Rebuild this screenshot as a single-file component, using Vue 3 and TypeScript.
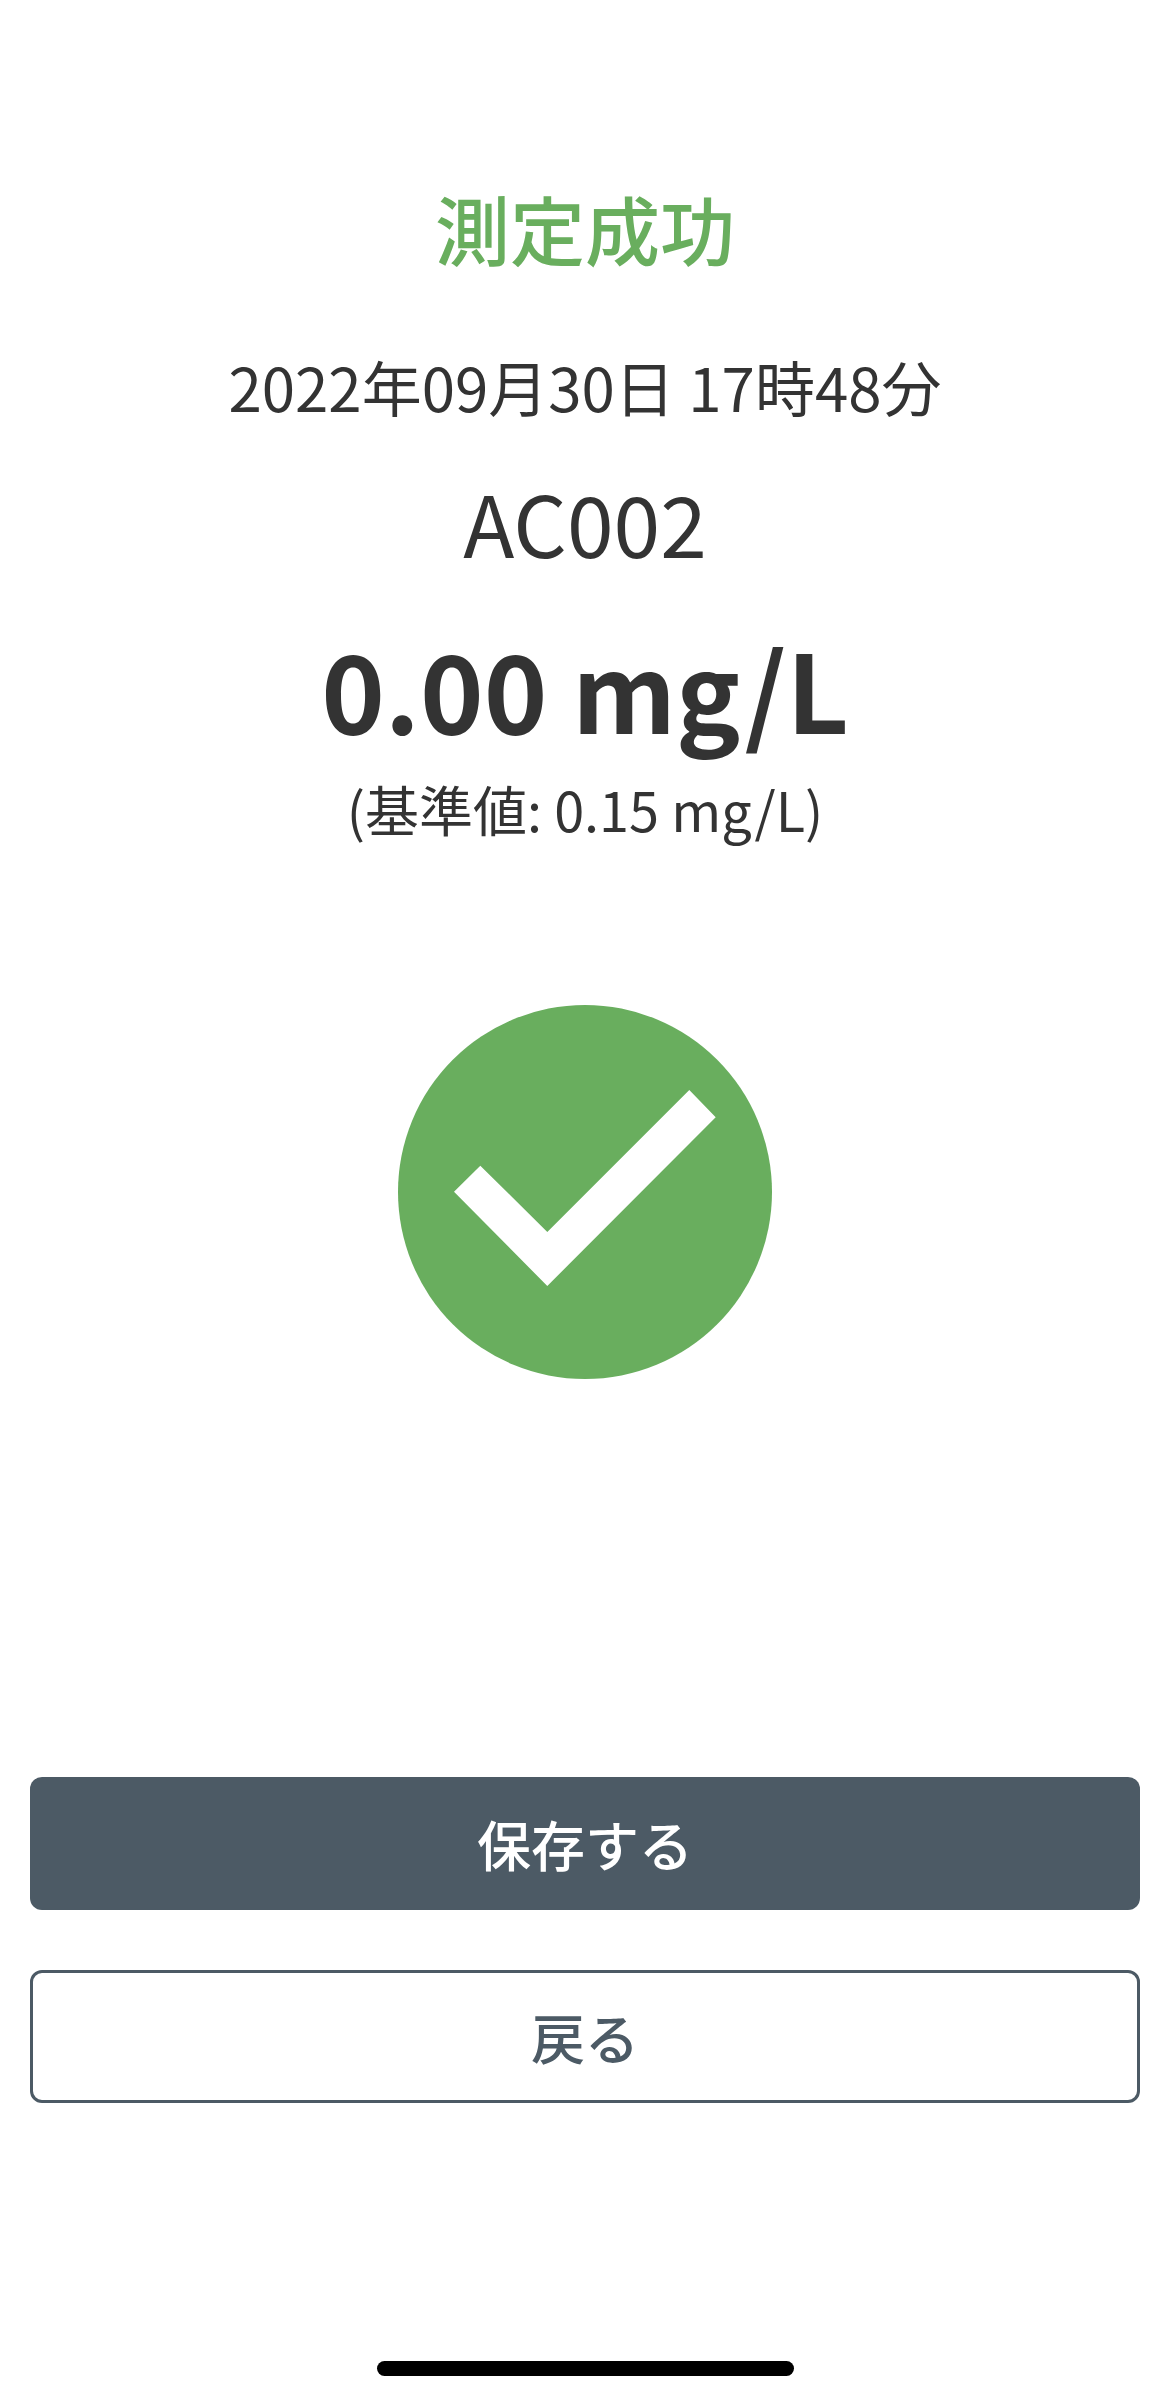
<template>
  <div class="page">
    <h1 class="title">測定成功</h1>
    <p class="date">2022年09月30日 17時48分</p>
    <p class="device">AC002</p>
    <p class="value">0.00 mg/L</p>
    <p class="limit">(基準値: 0.15 mg/L)</p>

    <svg class="result-icon" viewBox="0 0 374 374" width="374" height="374" aria-hidden="true">
      <circle cx="187" cy="187" r="187" fill="#69ae5e" />
      <polygon
        points="56,186.7 82.3,160.7 149.3,227 291.3,85 317.7,112.3 149.3,281"
        fill="#fff"
      />
    </svg>

    <div class="actions">
      <button class="btn btn-primary" type="button">保存する</button>
      <button class="btn btn-outline" type="button">戻る</button>
    </div>

    <div class="home-bar"></div>
  </div>
</template>

<script setup lang="ts">
</script>

<style>
html,
body {
  margin: 0;
  background: #fff;
}
</style>

<style scoped>
.page {
  box-sizing: border-box;
  width: 1170px;
  height: 2400px;
  padding: 0 30px 24px;
  display: flex;
  flex-direction: column;
  align-items: center;
  font-family: "Noto Sans CJK JP", "Noto Sans", sans-serif;
  color: #333;
  text-align: center;
}

.title {
  margin: 178px 0 0;
  font-size: 75px;
  line-height: 100px;
  font-weight: 500;
  color: #69ae5e;
}

.date {
  margin: 68px 0 0;
  font-size: 60px;
  line-height: 80px;
}

.device {
  margin: 38px 0 0;
  font-size: 84px;
  line-height: 116px;
}

.value {
  margin: 29px 0 0;
  font-size: 108px;
  line-height: 156px;
  font-weight: 700;
}

.limit {
  margin: 5px 0 0;
  font-size: 54px;
  line-height: 78px;
}

.result-icon {
  display: block;
  margin-top: 157px;
}

.actions {
  width: 100%;
  margin-top: auto;
  display: flex;
  flex-direction: column;
  gap: 60px;
}

.btn {
  box-sizing: border-box;
  width: 100%;
  height: 133px;
  border-radius: 12px;
  font-family: inherit;
  font-size: 54px;
  font-weight: 500;
  padding: 0;
}

.btn-primary {
  background: #4c5a65;
  border: 0;
  color: #fff;
}

.btn-outline {
  background: #fff;
  border: 3px solid #4c5a65;
  color: #4c5a65;
}

.home-bar {
  width: 417px;
  height: 15px;
  margin-top: 258px;
  border-radius: 8px;
  background: #000;
}
</style>
